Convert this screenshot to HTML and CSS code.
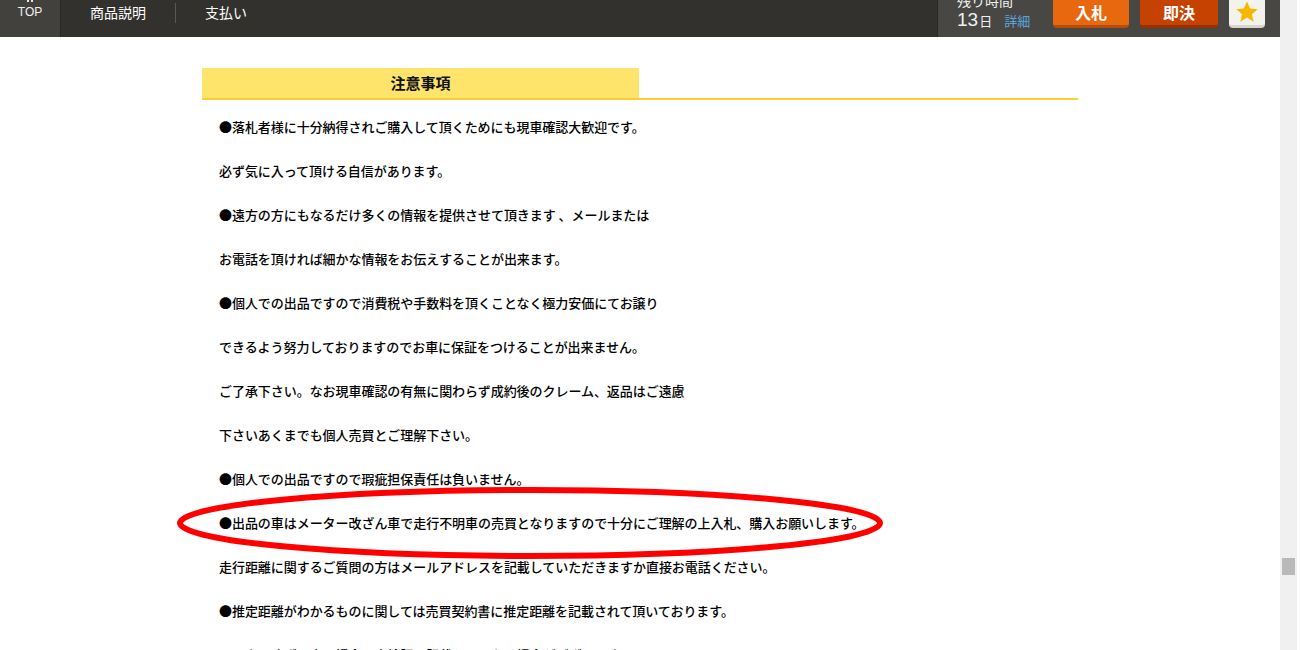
FILE: index.html
```html
<!DOCTYPE html>
<html lang="ja">
<head>
<meta charset="utf-8">
<title>注意事項</title>
<link rel="stylesheet" href="styles.css">
</head>
<body>
<div class="frame">
  <div class="viewport">
    <header class="topbar">
      <a class="top-cell" href="#">
        <span class="top-dots"><i></i><i></i></span>
        <span class="top-label">TOP</span>
      </a>
      <nav class="tabs">
        <a class="tab" href="#">商品説明</a>
        <span class="tab-sep"></span>
        <a class="tab" href="#">支払い</a>
      </nav>
      <div class="action-panel">
        <div class="time-info">
          <div class="time-label">残り時間</div>
          <div class="time-value"><span class="num">13</span><span class="unit">日</span><a class="detail" href="#">詳細</a></div>
        </div>
        <a class="btn btn-bid" href="#">入札</a>
        <a class="btn btn-buy" href="#">即決</a>
        <a class="btn btn-star" href="#">
          <svg width="24" height="24" viewBox="0 0 24 24"><path d="M12 1.5l3.1 7.1 7.6.6-5.8 5 1.8 7.5L12 17.6l-6.7 4.1 1.8-7.5-5.8-5 7.6-.6z" fill="#f5b700"/></svg>
        </a>
      </div>
    </header>

    <main class="content">
      <div class="section-head">
        <h2 class="section-title">注意事項</h2>
      </div>
      <div class="notes">
        <p>●落札者様に十分納得されご購入して頂くためにも現車確認大歓迎です。</p>
        <p>必ず気に入って頂ける自信があります。</p>
        <p>●遠方の方にもなるだけ多くの情報を提供させて頂きます 、メールまたは</p>
        <p>お電話を頂ければ細かな情報をお伝えすることが出来ます。</p>
        <p>●個人での出品ですので消費税や手数料を頂くことなく極力安価にてお譲り</p>
        <p>できるよう努力しておりますのでお車に保証をつけることが出来ません。</p>
        <p>ご了承下さい。なお現車確認の有無に関わらず成約後のクレーム、返品はご遠慮</p>
        <p>下さいあくまでも個人売買とご理解下さい。</p>
        <p>●個人での出品ですので瑕疵担保責任は負いません。</p>
        <p class="marked">●出品の車はメーター改ざん車で走行不明車の売買となりますので十分にご理解の上入札、購入お願いします。
          <svg class="circle-mark" width="712" height="76" viewBox="0 0 712 76"><ellipse cx="356" cy="38" rx="350" ry="33" fill="none" stroke="#ff0000" stroke-width="6"/></svg>
        </p>
        <p>走行距離に関するご質問の方はメールアドレスを記載していただきますか直接お電話ください。</p>
        <p>●推定距離がわかるものに関しては売買契約書に推定距離を記載されて頂いております。</p>
        <p>メーター改ざん車の場合は車検証の記載とは異なる場合がございます。</p>
      </div>
    </main>
  </div>
  <div class="scrollbar"><div class="thumb"></div></div>
</div>
</body>
</html>
```

FILE: styles.css
```css
* { box-sizing: border-box; }
html, body { margin: 0; padding: 0; background: #fff; overflow: hidden; height: 650px; }
body { font-family: "Noto Sans CJK JP", "Noto Sans", sans-serif; color: #000; }
a { text-decoration: none; color: inherit; }

.frame { display: flex; width: 1300px; height: 650px; }
.viewport { width: 1280px; height: 650px; overflow: hidden; }
.scrollbar { width: 17px; height: 650px; background: #f0f0f0; padding: 558px 2px 0; }
.thumb { height: 17px; background: #b9b9b9; }

/* top bar */
.topbar { display: flex; height: 37px; background: #33312e; color: #fff; overflow: hidden; }
.top-cell { width: 61px; background: #43413d; border-right: 1px solid #2a2825; display: flex; flex-direction: column; align-items: center; }
.top-dots { display: flex; gap: 2px; height: 3px; margin-top: 0; }
.top-dots i { width: 2px; height: 2px; background: #e8e8e8; display: block; }
.top-label { font-family: "Liberation Sans", Arial, sans-serif; font-size: 12px; line-height: 14px; margin-top: 2px; color: #f2f2f2; }
.tabs { display: flex; align-items: flex-start; padding-left: 29px; padding-top: 2px; }
.tab { font-size: 14px; line-height: 20px; color: #fff; }
.tab-sep { width: 1px; height: 20px; background: #5a5854; margin: 1px 29px 0; }

.action-panel { margin-left: auto; width: 343px; background: #484744; border-left: 1px solid #2a2825; display: flex; align-items: flex-start; padding-left: 19px; }
.time-info { width: 76px; margin-top: -8px; color: #f0f0f0; }
.time-label { font-size: 14px; line-height: 16px; }
.time-value { line-height: 22px; white-space: nowrap; }
.num { font-family: "Liberation Sans", Arial, sans-serif; font-size: 19px; }
.unit { font-size: 13px; margin-left: 1px; }
.detail { font-size: 13px; color: #58a6df; margin-left: 12px; }

.btn { display: flex; align-items: center; justify-content: center; height: 28px; border-radius: 0 0 4px 4px; font-size: 16px; font-weight: bold; color: #fff; padding-bottom: 2px; }
.btn-bid { width: 76px; margin-left: 20px; background: #e8680f; border-bottom: 3px solid #b54d0b; }
.btn-buy { width: 78px; margin-left: 11px; background: #c64200; border-bottom: 3px solid #963200; }
.btn-star { width: 36px; margin-left: 11px; background: #f3f2ed; border-bottom: 3px solid #d7d5cc; padding-bottom: 1px; }

/* content */
.content { width: 876px; margin: 31px auto 0; }
.section-head { border-bottom: 2px solid #fdcd33; }
.section-title { width: 437px; margin: 0; background: #fee46a; font-size: 15px; font-weight: bold; text-align: center; line-height: 30px; color: #111; }
.notes { padding: 17px 0 0 17px; }
.notes p { margin: 0 0 24px; font-size: 13px; line-height: 20px; letter-spacing: -0.05px; font-weight: 500; white-space: nowrap; }
.marked { position: relative; }
.circle-mark { position: absolute; left: -45px; top: -28px; pointer-events: none; }
```
